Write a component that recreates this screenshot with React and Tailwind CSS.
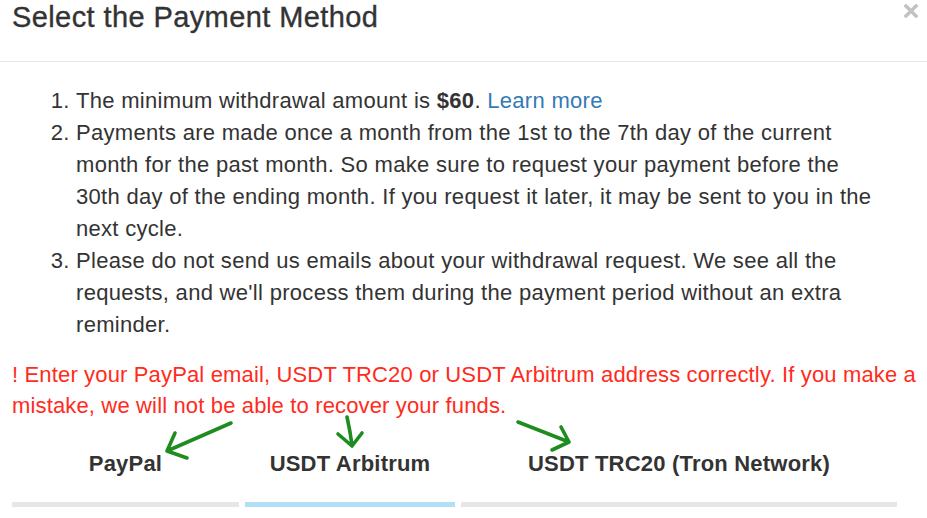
import React from "react";

// === ICONS ===
const CloseIcon = () => (
  <svg width="14" height="14" viewBox="0 0 14 14" fill="none" stroke="#c2c2c2" strokeWidth="3.4" strokeLinecap="square">
    <path d="M2 2l10 10M12 2L2 12" />
  </svg>
);

// green hand-drawn arrows on top of the tabs
const Arrows = () => (
  <svg
    className="absolute inset-0 pointer-events-none"
    width="927"
    height="518"
    viewBox="0 0 927 518"
    fill="none"
    stroke="#1f8c1f"
    strokeWidth="3.6"
    strokeLinecap="round"
    strokeLinejoin="round"
  >
    <path d="M231 423L167 451M175 433L167 451L187 458" />
    <path d="M347 417Q350 430 352 445M338 434L352 446L362 433" />
    <path d="M518 422L569 442M561 427L569 442L552 450" />
  </svg>
);

const tabs = [
  { label: "PayPal", width: "w-[227px]", bar: "bg-[#e6e6e6]" },
  { label: "USDT Arbitrum", width: "w-[210px]", bar: "bg-[#b1e0f6]" },
  { label: "USDT TRC20 (Tron Network)", width: "w-[436px]", bar: "bg-[#e6e6e6]" },
];

const App = () => {
  return (
    <div className="relative w-[927px] h-[518px] overflow-hidden bg-white text-[#333] font-['Liberation_Sans',Arial,sans-serif]">
      {/* Header */}
      <div className="flex items-start justify-between pl-[12px] pr-[9px] pb-[27px] border-b border-[#e5e5e5]">
        <h1 className="text-[29px] leading-[34px] font-normal tracking-[0.4px] [-webkit-text-stroke:0.35px_#333]">
          Select the Payment Method
        </h1>
        <button className="mt-[4px]">
          <CloseIcon />
        </button>
      </div>

      {/* Rules */}
      <ol className="list-decimal pl-[76px] pr-[49px] pt-[23px] text-[22px] leading-[32px] tracking-[0.3px]">
        <li>
          The minimum withdrawal amount is <b>$60</b>.{" "}
          <a href="#" className="text-[#337ab7]">Learn more</a>
        </li>
        <li>
          Payments are made once a month from the 1st to the 7th day of the current month for the past month. So
          make sure to request your payment before the 30th day of the ending month. If you request it later, it may
          be sent to you in the next cycle.
        </li>
        <li>
          Please do not send us emails about your withdrawal request. We see all the requests, and we'll process them
          during the payment period without an extra reminder.
        </li>
      </ol>

      {/* Warning */}
      <p className="mt-[18px] pl-[12px] text-[22px] leading-[31px] tracking-[0.15px] text-[#ff2b1c]">
        ! Enter your PayPal email, USDT TRC20 or USDT Arbitrum address correctly. If you make a mistake, we will not
        be able to recover your funds.
      </p>

      {/* Tabs */}
      <div className="flex gap-[6px] pl-[12px] mt-[27px]">
        {tabs.map((t) => (
          <div key={t.label} className={`${t.width} flex flex-col items-center`}>
            <span className="text-[22px] leading-[32px] font-bold tracking-[0.2px]">{t.label}</span>
            <div className={`mt-[22px] h-[5px] w-full ${t.bar}`} />
          </div>
        ))}
      </div>

      <Arrows />
    </div>
  );
};

export default App;
